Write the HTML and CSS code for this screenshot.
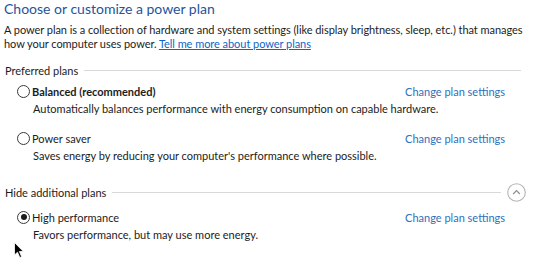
FILE: index.html
```html
<!DOCTYPE html>
<html>
<head>
	<meta charset="utf-8">
	<title>Power Options</title>
	<link rel="stylesheet" href="styles.css">
</head>
<body>
	<div class="page">
		<h1 class="title">Choose or customize a power plan</h1>
		<p class="intro">A power plan is a collection of hardware and system settings (like display brightness, sleep, etc.) that manages how your computer uses power. <a href="#" class="link">Tell me more about power plans</a></p>

		<div class="group">
			<div class="groupHead">
				<span>Preferred plans</span>
				<span class="rule"></span>
			</div>
			<div class="plan">
				<div class="planRow">
					<label class="radio"><span class="dot"></span><strong>Balanced (recommended)</strong></label>
					<a href="#" class="change">Change plan settings</a>
				</div>
				<div class="desc">Automatically balances performance with energy consumption on capable hardware.</div>
			</div>
			<div class="plan">
				<div class="planRow">
					<label class="radio"><span class="dot"></span>Power saver</label>
					<a href="#" class="change">Change plan settings</a>
				</div>
				<div class="desc">Saves energy by reducing your computer's performance where possible.</div>
			</div>
		</div>

		<div class="group more">
			<div class="groupHead">
				<span>Hide additional plans</span>
				<span class="rule"></span>
				<span class="collapse">
					<svg width="19" height="19" viewBox="0 0 19 19"><circle cx="9.5" cy="9.5" r="8.8" fill="#fff" stroke="#b4b4b4" stroke-width="1.1"/><path d="M6.2 11 L9.5 7.7 L12.8 11" fill="none" stroke="#8c8c8c" stroke-width="1.2"/></svg>
				</span>
			</div>
			<div class="plan">
				<div class="planRow">
					<label class="radio"><span class="dot on"></span>High performance</label>
					<a href="#" class="change">Change plan settings</a>
				</div>
				<div class="desc">Favors performance, but may use more energy.</div>
			</div>
		</div>
	</div>
	<svg class="cursor" width="10" height="17" viewBox="0 0 10 17"><path d="M0.5 0.5 L0.5 13 L3.5 10.2 L5.8 15.5 L7.6 14.7 L5.4 9.5 L9.3 9.5 Z" fill="#000" stroke="#fff" stroke-width="0.8"/></svg>
</body>
</html>
```

FILE: styles.css
```css
html, body {
	margin: 0;
	background: #fff;
	font-family: Lato, "Noto Sans", sans-serif;
	font-size: 11px;
	color: #1c1c1c;
}
.page {
	padding: 0 13px 0 4px;
}
.title {
	margin: 0;
	font-size: 14px;
	font-weight: normal;
	color: #23549d;
	line-height: 18px;
}
.intro {
	margin: 5px -12px 0 0;
	line-height: 14px;
	letter-spacing: -0.05px;
}
.link {
	color: #0a66c8;
}
.group {
	margin-top: 12px;
}
.group.more {
	margin-top: 22px;
}
.groupHead {
	display: flex;
	align-items: center;
	gap: 6px;
	height: 14px;
	padding-left: 1px;
}
.rule {
	flex: 1;
	border-top: 1px solid #d9d9d9;
}
.collapse {
	display: flex;
	margin-right: -5px;
}
.plan {
	padding-left: 13px;
	margin-top: 7px;
}
.plan + .plan {
	margin-top: 15px;
}
.more .plan {
	margin-top: 11px;
}
.planRow {
	display: flex;
	justify-content: space-between;
	align-items: center;
	height: 14px;
	padding-right: 16px;
}
.radio {
	display: flex;
	align-items: center;
	gap: 2px;
}
.dot {
	width: 13px;
	height: 13px;
	border: 1px solid #3a3a3a;
	border-radius: 50%;
	box-sizing: border-box;
	position: relative;
}
.dot.on::after {
	content: "";
	position: absolute;
	left: 2.5px;
	top: 2.5px;
	width: 6px;
	height: 6px;
	border-radius: 50%;
	background: #1c1c1c;
}
.change {
	color: #2e6fbd;
	text-decoration: none;
}
.desc {
	padding-left: 16px;
	margin-top: 4px;
	line-height: 14px;
}
.cursor {
	position: absolute;
	left: 14px;
	top: 242px;
}
```
